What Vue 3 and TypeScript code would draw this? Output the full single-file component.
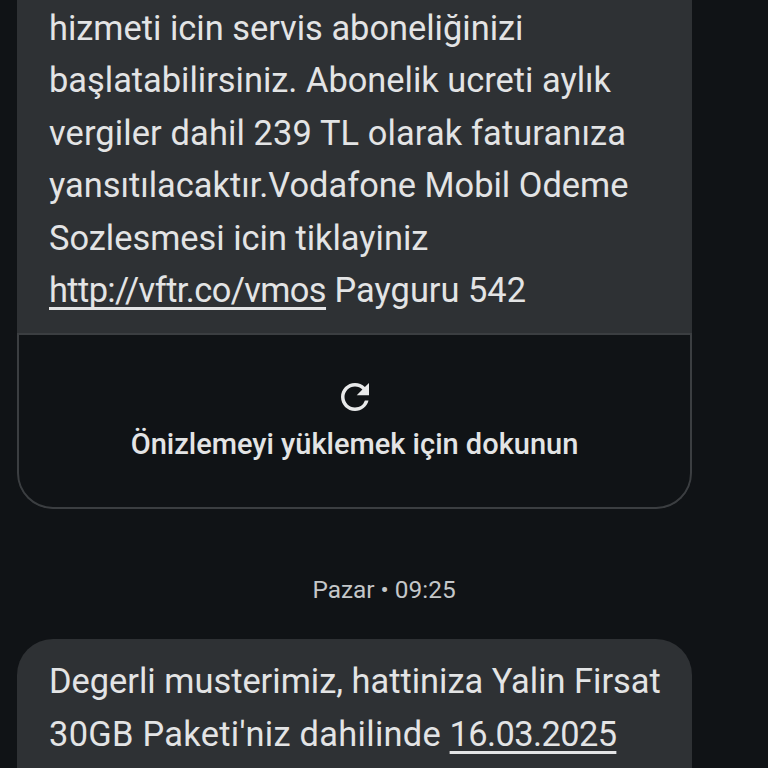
<script setup lang="ts">
const refreshPath =
  'M17.65 6.35A7.958 7.958 0 0 0 12 4c-4.42 0-7.99 3.58-7.99 8s3.57 8 7.99 8c3.73 0 6.84-2.55 7.73-6h-2.08A5.99 5.99 0 0 1 12 18c-3.31 0-6-2.69-6-6s2.69-6 6-6c1.66 0 3.14.69 4.22 1.78L13 11h7V4l-2.35 2.35z'
</script>

<template>
  <main class="thread">
    <article class="message first">
      <p class="bubble-text top-text">
        hizmeti icin servis aboneliğinizi<br />
        başlatabilirsiniz. Abonelik ucreti aylık<br />
        <span class="loose-slight">vergiler dahil 239 TL olarak faturanıza</span><br />
        yansıtılacaktır.Vodafone Mobil Odeme<br />
        Sozlesmesi icin tiklayiniz<br />
        <span class="link tight">http://vftr.co/vmos</span> Payguru 542
      </p>
      <div class="preview">
        <svg class="refresh" viewBox="0 0 24 24" aria-hidden="true">
          <path :d="refreshPath" />
        </svg>
        <span class="preview-label">Önizlemeyi yüklemek için dokunun</span>
      </div>
    </article>

    <div class="stamp">Pazar • 09:25</div>

    <article class="message second">
      <p class="bubble-text second-text">
        Degerli musterimiz, hattiniza Yalin Firsat<br />
        <span class="loose">30GB Paketi'niz dahilinde</span> <span class="link tight">16.03.2025</span>
      </p>
    </article>
  </main>
</template>

<style>
html,
body {
  margin: 0;
  background: #101316;
}
</style>

<style scoped>
.thread {
  width: 768px;
  height: 768px;
  overflow: hidden;
  background: #101316;
  font-family: Roboto, "Noto Sans", sans-serif;
  display: flex;
  flex-direction: column;
}

.message {
  width: 675px;
  margin-left: 17px;
  background: #2e3134;
  flex: none;
}

.first {
  overflow: hidden;
  border-radius: 0 0 36px 36px;
}

.second {
  border-radius: 36px 36px 0 0;
  height: 200px;
}

.bubble-text {
  margin: 0;
  padding: 0 32px;
  font-size: 34.4px;
  line-height: 52.4px;
  color: #e3e4e5;
  white-space: nowrap;
}

.top-text {
  padding-top: 2px;
  padding-bottom: 17px;
}

.second-text {
  padding-top: 16px;
}

.link {
  text-decoration: underline;
  text-decoration-thickness: 3px;
  text-underline-offset: 5px;
  text-decoration-skip-ink: none;
}

.tight {
  letter-spacing: -0.6px;
}

.loose {
  letter-spacing: 0.3px;
}

.loose-slight {
  letter-spacing: 0.12px;
}

.preview {
  height: 176px;
  box-sizing: border-box;
  background: #101316;
  border: 2px solid #3b3e41;
  border-radius: 0 0 36px 36px;
  display: flex;
  flex-direction: column;
  align-items: center;
  padding-top: 41px;
  gap: 8px;
}

.refresh {
  width: 42px;
  height: 42px;
  fill: #e8e9ea;
}

.preview-label {
  font-size: 29px;
  line-height: 36px;
  font-weight: 500;
  color: #e3e4e5;
}

.stamp {
  margin-top: 65px;
  height: 32px;
  line-height: 32px;
  text-align: center;
  font-size: 24.4px;
  color: #c4c7c9;
  margin-bottom: 33px;
  flex: none;
}
</style>
